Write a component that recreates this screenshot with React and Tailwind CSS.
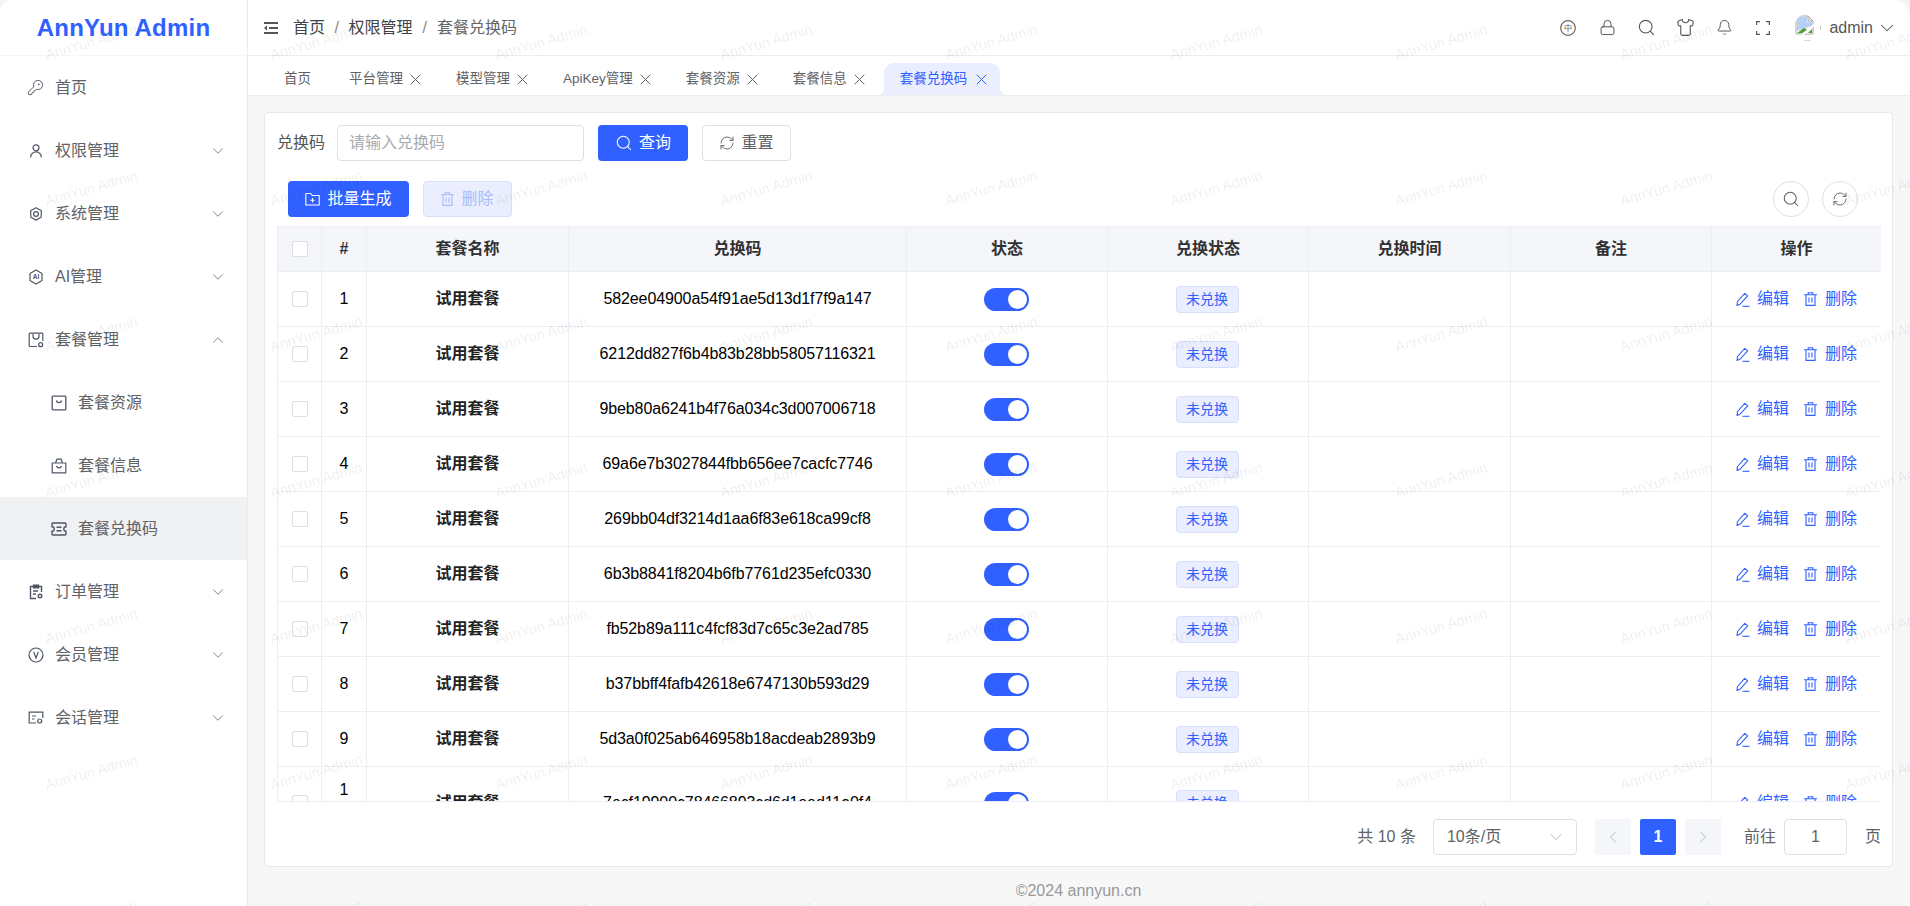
import React from "react";
import { ChevronDown, ChevronUp, ChevronLeft, ChevronRight, Search, RefreshCw, KeyRound, Shirt, Bell, Lock } from "lucide-react";

const base = {
  width: 16,
  height: 16,
  viewBox: "0 0 16 16",
  fill: "none",
  stroke: "currentColor",
  strokeWidth: 1.2,
};

const CloseIcon = () => (
  <svg width="11" height="11" viewBox="0 0 11 11" fill="none" stroke="currentColor" strokeWidth="1" className="shrink-0">
    <path d="M.7.7l9.600 9.600M10.300.7L.7 10.300" />
  </svg>
);
const UserIcon = () => (
  <svg {...base}>
    <circle cx="8" cy="4.800" r="3" />
    <path d="M2.600 14.500c0-3.200 2.400-5.600 5.400-5.600s5.400 2.400 5.400 5.600" />
  </svg>
);
const GearIcon = () => (
  <svg {...base}>
    <path d="M8 1.800l5.300 3v6.200L8 14.200 2.700 11V4.800z" strokeLinejoin="round" />
    <circle cx="8" cy="8" r="2.400" />
  </svg>
);
const AiIcon = () => (
  <svg {...base}>
    <path d="M8 1l6 3.400v7.200L8 15l-6-3.400V4.400z" strokeLinejoin="round" />
    <text x="8" y="10.400" textAnchor="middle" fontSize="6.500" fontWeight="700" fill="currentColor" stroke="none" fontFamily="Liberation Sans">AI</text>
  </svg>
);
const PackageIcon = () => (
  <svg {...base}>
    <path d="M9 14.500H2a.8.8 0 0 1-.8-.8V2a.8.8 0 0 1 .8-.8h12a.8.8 0 0 1 .8.8v7" />
    <path d="M5 2v2.200a3 3 0 0 0 6 0V2" />
    <circle cx="12.700" cy="12.700" r="2" />
  </svg>
);
const BoxIcon = () => (
  <svg {...base} strokeWidth="1.300">
    <rect x="1.200" y="1.200" width="13.600" height="13.600" rx="0.600" />
    <path d="M5.300 5.500c.6 2.800 4.800 2.800 5.400 0" />
  </svg>
);
const BagIcon = () => (
  <svg {...base}>
    <path d="M1.200 5h13.600v9.800H1.200z" strokeLinejoin="round" />
    <path d="M4.500 5l1.500-3.800h4L11.500 5" />
    <path d="M5.500 8c.6 2.600 4.400 2.600 5 0" />
  </svg>
);
const TicketIcon = () => (
  <svg {...base} strokeWidth="1.400">
    <path d="M2 2h12a1 1 0 0 1 1 1v2.800a2.200 2.200 0 0 0 0 4.400V13a1 1 0 0 1-1 1H2a1 1 0 0 1-1-1v-2.800a2.200 2.200 0 0 0 0-4.400V3a1 1 0 0 1 1-1z" />
    <path d="M5.500 6.300h5M5.500 9.700h5" />
  </svg>
);
const OrderIcon = () => (
  <svg {...base} strokeWidth="1.400">
    <path d="M8 14.500H2.500v-12h11V8" />
    <path d="M5.500 1.200h5v2.600h-5z" />
    <path d="M5 7h5M5 10h3" />
    <circle cx="12" cy="12" r="1.800" />
  </svg>
);
const VipIcon = () => (
  <svg {...base}>
    <circle cx="8" cy="8" r="7" />
    <path d="M5.700 4.900L8 11l2.300-6.100" />
  </svg>
);
const ChatIcon = () => (
  <svg {...base}>
    <path d="M8 13H1.200V2.200h13.600V8" />
    <path d="M4 6h4M4 9h2.500" />
    <circle cx="11.700" cy="11" r="2" />
  </svg>
);
const MenuFoldIcon = () => (
  <svg width="14" height="12" viewBox="0 0 14 12" fill="#555" className="shrink-0">
    <path d="M0 0h14v2H0zM5 5h9v2H5zM0 10h14v2H0zM0 6l3-2.500v5z" />
  </svg>
);
const EditIcon = () => (
  <svg width="14" height="15" viewBox="0 0 14 15" fill="none" stroke="currentColor" strokeWidth="1.100">
    <path d="M1 13.500l.5-4L8.700 1.300l3 2.600-7.400 8z" strokeLinejoin="round" />
    <path d="M6.500 14.300h7" />
  </svg>
);
const TrashIcon = () => (
  <svg width="13" height="14" viewBox="0 0 13 14" fill="none" stroke="currentColor" strokeWidth="1.100">
    <path d="M0 2.800h13M4.200 2.800V.8h4.600v2M2 2.800v10.600h9V2.800M5 5.500v5M8 5.500v5" />
  </svg>
);
const FolderPlusIcon = () => (
  <svg width="15" height="14" viewBox="0 0 15 14" fill="none" stroke="currentColor" strokeWidth="1.100">
    <path d="M.8 1.500h5l1.400 2h7v9.500H.8z" strokeLinejoin="round" />
    <path d="M7.500 6v4.400M5.300 8.200h4.400" />
  </svg>
);
const LangIcon = () => (
  <svg width="16" height="16" viewBox="0 0 16 16" fill="none" className="shrink-0 text-[#6e5f55]">
    <circle cx="8" cy="8" r="7.300" stroke="currentColor" strokeWidth="1.200" />
    <text x="8" y="11" textAnchor="middle" fontSize="8.500" fill="currentColor" fontFamily="Noto Sans CJK SC">中</text>
  </svg>
);
const FullIcon = () => (
  <svg width="14" height="14" viewBox="0 0 14 14" fill="none" stroke="currentColor" strokeWidth="1.200" className="shrink-0">
    <path d="M.6 4V.6H4M10 .6h3.400V4M13.400 10v3.400H10M4 13.400H.6V10" />
  </svg>
);
const BrokenImage = () => (
  <svg width="27" height="27" viewBox="0 0 27 27" fill="none">
    <path d="M2 2h12l5 5v13H2z" fill="#fff" stroke="#a8a8a8" />
    <path d="M3 3h10v5h5v4L3 17z" fill="#b7cff2" />
    <path d="M14 2l5 5h-5z" fill="#ececec" stroke="#a8a8a8" />
    <path d="M3 19l7-5 4 2-5 3z" fill="#4c9d32" />
    <path d="M14 19l4-4v4z" fill="#4c9d32" />
    <path d="M8 21L20 11" stroke="#fff" strokeWidth="2" />
    <path d="M10 26.500c2 .4 5 .4 7 0M26.500 11v5" stroke="#c8c8c8" />
  </svg>
);

const menu = [
  { label: "首页", icon: <KeyRound size={17} strokeWidth={1.4} className="-ml-[1px]" /> },
  { label: "权限管理", icon: <UserIcon />, arrow: "down" },
  { label: "系统管理", icon: <GearIcon />, arrow: "down" },
  { label: "AI管理", icon: <AiIcon />, arrow: "down" },
  { label: "套餐管理", icon: <PackageIcon />, arrow: "up" },
  { label: "套餐资源", icon: <BoxIcon />, sub: true },
  { label: "套餐信息", icon: <BagIcon />, sub: true },
  { label: "套餐兑换码", icon: <TicketIcon />, sub: true, active: true },
  { label: "订单管理", icon: <OrderIcon />, arrow: "down" },
  { label: "会员管理", icon: <VipIcon />, arrow: "down" },
  { label: "会话管理", icon: <ChatIcon />, arrow: "down" },
];

const tabs = ["平台管理", "模型管理", "ApiKey管理", "套餐资源", "套餐信息"];

const codes = [
  "582ee04900a54f91ae5d13d1f7f9a147",
  "6212dd827f6b4b83b28bb58057116321",
  "9beb80a6241b4f76a034c3d007006718",
  "69a6e7b3027844fbb656ee7cacfc7746",
  "269bb04df3214d1aa6f83e618ca99cf8",
  "6b3b8841f8204b6fb7761d235efc0330",
  "fb52b89a111c4fcf83d7c65c3e2ad785",
  "b37bbff4fafb42618e6747130b593d29",
  "5d3a0f025ab646958b18acdeab2893b9",
  "7ecf19900c78466893cd6d1eed11a0f4",
];

const headers = ["#", "套餐名称", "兑换码", "状态", "兑换状态", "兑换时间", "备注", "操作"];

const Checkbox = () => (
  <span className="block w-4 h-4 mx-auto bg-white border border-[#dcdfe6] rounded-[2px]" />
);

const HeadIcon = ({ children }) => (
  <span className="flex items-center justify-center w-4 h-4">{children}</span>
);

const App = () => {
  return (
    <div className="relative flex w-screen h-screen overflow-hidden bg-[#f3f3f3] text-base text-[#606266] font-['Liberation_Sans','Noto_Sans_CJK_SC',sans-serif]">
      <aside className="w-[248px] shrink-0 bg-white border-r border-[#ebebeb] rounded-tl-[12px]">
        <div className="flex items-center justify-center h-[56px] border-b border-[#f6f6f6] text-2xl font-bold tracking-[0.2px] text-[#3060ff]">
          AnnYun Admin
        </div>
        <nav>
          {menu.map((item) => (
            <div
              key={item.label}
              className={`flex items-center h-[63px] pr-[20px] ${item.sub ? "pl-[51px]" : "pl-[28px]"} ${item.active ? "bg-[#f0f1f3]" : ""}`}
            >
              <span className="shrink-0 w-4 mr-[11px] text-[#4f5665]">{item.icon}</span>
              <span className="flex-1">{item.label}</span>
              {item.arrow === "down" && <ChevronDown size={18} strokeWidth={1.2} className="text-[#777]" />}
              {item.arrow === "up" && <ChevronUp size={18} strokeWidth={1.2} className="text-[#777]" />}
            </div>
          ))}
        </nav>
      </aside>

      <div className="flex flex-col flex-1 min-w-0">
        <header className="flex items-center h-[56px] pl-[16px] pr-[12px] bg-white border-b border-[#ededed] rounded-tr-[16px]">
          <MenuFoldIcon />
          <span className="ml-[15px] text-[#404246]">首页</span>
          <span className="mx-[9.500px] text-[#888]">/</span>
          <span className="text-[#404246]">权限管理</span>
          <span className="mx-[10px] text-[#888]">/</span>
          <span className="text-[#666]">套餐兑换码</span>
          <div className="flex items-center gap-[23px] ml-auto text-[#555]">
            <LangIcon />
            <HeadIcon>
              <Lock size={17} strokeWidth={1.4} className="shrink-0" />
            </HeadIcon>
            <HeadIcon>
              <Search size={19} strokeWidth={1.4} className="shrink-0" />
            </HeadIcon>
            <HeadIcon>
              <Shirt size={19} strokeWidth={1.4} className="shrink-0" />
            </HeadIcon>
            <HeadIcon>
              <Bell size={17} strokeWidth={1.4} className="shrink-0" />
            </HeadIcon>
            <HeadIcon>
              <FullIcon />
            </HeadIcon>
            <div className="flex items-center">
              <span className="flex items-center justify-center w-[27px] h-[27px] overflow-hidden rounded-full">
                <BrokenImage />
              </span>
              <span className="ml-[8px] text-[#555]">admin</span>
              <ChevronDown size={22} strokeWidth={1.1} className="ml-[3px]" />
            </div>
          </div>
        </header>

        <div className="flex items-end gap-[3px] h-[40px] pl-[20px] bg-white border-b border-[#ededed] text-[13.500px]">
          <div className="flex items-center h-[32px] pl-[16px] pr-[19px]">首页</div>
          {tabs.map((tab) => (
            <div key={tab} className="flex items-center h-[32px] px-[16px]">
              {tab}
              <span className="ml-[7px]">
                <CloseIcon />
              </span>
            </div>
          ))}
          <div className="relative flex items-center h-[32px] pl-[16px] pr-[13px] rounded-t-[10px] bg-[#eaeefe] text-[#3060ff]">
            <svg width="6" height="6" viewBox="0 0 6 6" className="absolute bottom-0 -left-[6px]">
              <path d="M6 0v6H0c3 0 5-2 6-6z" fill="#eaeefe" />
            </svg>
            套餐兑换码
            <span className="ml-[9px]">
              <CloseIcon />
            </span>
            <svg width="6" height="6" viewBox="0 0 6 6" className="absolute bottom-0 -right-[6px]">
              <path d="M0 0v6h6C3 6 1 4 0 0z" fill="#eaeefe" />
            </svg>
          </div>
        </div>

        <main className="flex flex-col flex-1 min-h-0 pt-[16px] pl-[16px] pr-[17px] bg-[#f7f7f8]">
          <section className="flex flex-col h-[755px] pl-[12px] pr-[11px] bg-white border border-[#e6e8f0] rounded-[4px]">
            <div className="flex items-center h-[36px] mt-[12px]">
              <span className="w-[60px] text-[#555]">兑换码</span>
              <div className="flex items-center w-[247px] h-full px-[11px] border border-[#dcdfe6] rounded-[4px] text-[#a8abb2]">
                请输入兑换码
              </div>
              <button className="flex items-center justify-center w-[90px] h-full ml-[14px] gap-[6px] rounded-[4px] bg-[#3060ff] text-white">
                <Search size={18} strokeWidth={1.4} />
                查询
              </button>
              <button className="flex items-center justify-center w-[89px] h-full ml-[14px] gap-[6px] border border-[#dcdfe6] rounded-[4px] text-[#606266]">
                <RefreshCw size={16} strokeWidth={1.4} />
                重置
              </button>
            </div>

            <div className="flex items-center h-[36px] mt-[20px] pl-[11px] pr-[23px]">
              <button className="flex items-center justify-center w-[121px] h-full gap-[7px] rounded-[4px] bg-[#3060ff] text-white">
                <FolderPlusIcon />
                批量生成
              </button>
              <button className="flex items-center justify-center w-[89px] h-full ml-[14px] gap-[7px] border border-[#d6dffd] rounded-[4px] bg-[#eaeefe] text-[#a8bbfb]">
                <TrashIcon />
                删除
              </button>
              <button className="flex items-center justify-center w-9 h-9 ml-auto border border-[#dcdfe6] rounded-full text-[#606266]">
                <Search size={18} strokeWidth={1.4} />
              </button>
              <button className="flex items-center justify-center w-9 h-9 ml-[13px] border border-[#dcdfe6] rounded-full text-[#606266]">
                <RefreshCw size={16} strokeWidth={1.4} />
              </button>
            </div>

            <div className="w-[1604px] h-[576px] mt-[9px] overflow-hidden border-b border-[#ebeef5]">
              <table className="w-[1604px] table-fixed border-collapse">
                <colgroup>
                  <col className="w-[44px]" />
                  <col className="w-[45px]" />
                  <col className="w-[202px]" />
                  <col className="w-[338px]" />
                  <col className="w-[201px]" />
                  <col className="w-[201px]" />
                  <col className="w-[202px]" />
                  <col className="w-[201px]" />
                  <col className="w-[170px]" />
                </colgroup>
                <thead>
                  <tr className="h-[45px] bg-[#f5f6fa]">
                    <th className="border border-[#ebeef5]">
                      <Checkbox />
                    </th>
                    {headers.map((h) => (
                      <th key={h} className="border border-[#ebeef5] font-bold text-[#303133]">
                        {h}
                      </th>
                    ))}
                  </tr>
                </thead>
                <tbody>
                  {codes.map((code, i) => (
                    <tr key={code} className="h-[55px] text-black">
                      <td className="py-[10px] border border-[#ebeef5]">
                        <Checkbox />
                      </td>
                      <td className="py-[10px] px-[14px] border border-[#ebeef5] text-center leading-[26px] break-all">
                        {i + 1}
                      </td>
                      <td className="border border-[#ebeef5] text-center font-semibold text-[#222]">试用套餐</td>
                      <td className="border border-[#ebeef5] text-center tracking-[-0.1px]">{code}</td>
                      <td className="pr-[2px] border border-[#ebeef5]">
                        <span className="flex items-center justify-end w-[45px] h-[23px] mx-auto pr-[2px] rounded-full bg-[#3060ff]">
                          <span className="block w-[19px] h-[19px] rounded-full bg-white" />
                        </span>
                      </td>
                      <td className="pr-[2px] border border-[#ebeef5] text-center">
                        <span className="inline-flex items-center justify-center w-[63px] h-[27px] border border-[#d6dffd] rounded-[4px] bg-[#eaeefe] text-sm text-[#3060ff]">
                          未兑换
                        </span>
                      </td>
                      <td className="border border-[#ebeef5]" />
                      <td className="border border-[#ebeef5]" />
                      <td className="border border-[#ebeef5]">
                        <div className="flex items-center justify-center text-[#3060ff]">
                          <EditIcon />
                          <span className="ml-[7px]">编辑</span>
                          <span className="ml-[15px]">
                            <TrashIcon />
                          </span>
                          <span className="ml-[8px]">删除</span>
                        </div>
                      </td>
                    </tr>
                  ))}
                </tbody>
              </table>
            </div>

            <div className="flex items-center justify-end h-[36px] mt-[17px] text-[#606266]">
              <span>共 10 条</span>
              <div className="flex items-center justify-between w-[144px] h-full ml-[17px] pl-[13px] pr-[10px] border border-[#dcdfe6] rounded-[4px]">
                10条/页
                <ChevronDown size={20} strokeWidth={1.1} className="text-[#a8abb2]" />
              </div>
              <span className="flex items-center justify-center w-[36px] h-full ml-[18px] rounded-[2px] bg-[#f5f6fa] text-[#b5b8bf]">
                <ChevronLeft size={20} strokeWidth={1.2} />
              </span>
              <span className="flex items-center justify-center w-[36px] h-full ml-[9px] rounded-[2px] bg-[#3060ff] font-bold text-white">
                1
              </span>
              <span className="flex items-center justify-center w-[36px] h-full ml-[9px] rounded-[2px] bg-[#f5f6fa] text-[#b5b8bf]">
                <ChevronRight size={20} strokeWidth={1.2} />
              </span>
              <span className="ml-[23px]">前往</span>
              <span className="flex items-center justify-center w-[63px] h-full ml-[8px] border border-[#dcdfe6] rounded-[4px]">
                1
              </span>
              <span className="ml-[18px]">页</span>
            </div>
          </section>
          <footer className="flex items-center justify-center flex-1 pt-[8px] text-[#999]">©2024 annyun.cn</footer>
        </main>
      </div>

      <div className="absolute -left-[21px] -top-[30px] grid grid-cols-[repeat(9,225px)] auto-rows-[146px] pointer-events-none">
        {Array.from({ length: 63 }).map((_, i) => (
          <span key={i} className="flex items-center justify-center -rotate-[16deg] text-[14.500px] whitespace-nowrap text-black/[0.08]">
            AnnYun Admin
          </span>
        ))}
      </div>
    </div>
  );
};

export default App;
